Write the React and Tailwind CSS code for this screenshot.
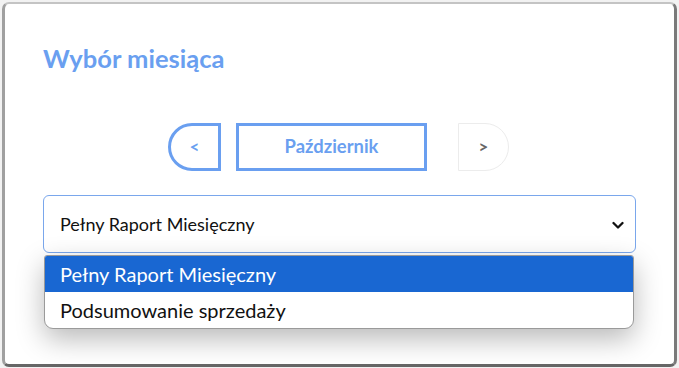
import React, { useState } from 'react';

const months = ['Styczeń', 'Luty', 'Marzec', 'Kwiecień', 'Maj', 'Czerwiec', 'Lipiec', 'Sierpień', 'Wrzesień', 'Październik', 'Listopad', 'Grudzień'];

const reports = ['Pełny Raport Miesięczny', 'Podsumowanie sprzedaży'];

const App = () => {
    const [month, setMonth] = useState(9);
    const [report, setReport] = useState(0);

    return (
        <div className="w-[679px] h-[368px] bg-[#f2f2f2] pl-[2px] pt-[2px] overflow-hidden" style={{ fontFamily: 'Lato, "Noto Sans", sans-serif' }}>
            {/* Modal card */}
            <div className="relative w-[675px] h-[365px] bg-white rounded-[7px] border-t-2 border-t-[#c4c4c4] border-l-[3px] border-l-[#a0a0a0] border-r-[3px] border-r-[#7a7a7a] border-b-[3px] border-b-[#666] px-[38px] pt-[39px]">
                <h2 className="text-[25.5px] leading-[31px] font-bold text-[#6a9ff0]">Wybór miesiąca</h2>

                {/* Month switcher */}
                <div className="mt-[49px] flex items-center pl-[125px]">
                    <button
                        onClick={() => setMonth((month + 11) % 12)}
                        className="w-[53px] h-[48px] rounded-l-[24px] border-[3px] border-[#6a9ff0] text-[#6a9ff0] text-[17px] font-bold flex items-center justify-center"
                    >
                        &lt;
                    </button>
                    <div className="ml-[15px] w-[191px] h-[48px] border-[3px] border-[#6a9ff0] text-[#6a9ff0] text-[18.4px] font-bold flex items-center justify-center">
                        {months[month]}
                    </div>
                    <button
                        onClick={() => setMonth((month + 1) % 12)}
                        className="ml-[31px] w-[51px] h-[48px] rounded-r-[24px] border border-[#ececec] text-[#666] text-[17px] font-bold flex items-center justify-center"
                    >
                        &gt;
                    </button>
                </div>

                {/* Report select */}
                <div className="mt-[24px] h-[58px] rounded-[6px] border border-[#7aa7ec] flex items-center justify-between pl-[16px] pr-[11px] text-[18px] text-[#111]">
                    <span>{reports[report]}</span>
                    <svg width="12" height="9" viewBox="0 0 12 9" fill="none" stroke="#111" strokeWidth="2.3" strokeLinecap="round" strokeLinejoin="round" className="mt-[2px]">
                        <path d="M1.5 2 L6 6.5 L10.5 2" />
                    </svg>
                </div>

                {/* Open list */}
                <div className="absolute left-[39px] top-[251px] w-[590px] bg-white rounded-b-[9px] rounded-t-[3px] border border-[#9a9a9a] overflow-hidden shadow-[0_10px_28px_rgba(0,0,0,0.28)] text-[20px]">
                    {reports.map((r, i) => (
                        <div
                            key={r}
                            onClick={() => setReport(i)}
                            className={`h-[36px] flex items-center pl-[15px] ${i === report ? 'bg-[#1967d2] text-white' : 'text-[#111]'}`}
                        >
                            {r}
                        </div>
                    ))}
                </div>
            </div>
        </div>
    );
};

export default App;
